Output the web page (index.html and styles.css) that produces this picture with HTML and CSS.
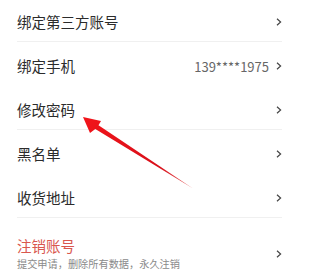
FILE: index.html
```html
<!DOCTYPE html>
<html lang="zh-CN">
<head>
<meta charset="utf-8">
<link rel="stylesheet" href="styles.css">
</head>
<body>
<div class="page">
  <div class="list">
    <div class="row divided"><span class="label">绑定第三方账号</span><span class="chev"><svg viewBox="0 0 6 8" width="6" height="8"><path d="M1 0.8 L4.6 4 L1 7.2" fill="none" stroke="#444" stroke-width="1.2"/></svg></span></div>
    <div class="row"><span class="label">绑定手机</span><span class="value">139****1975</span><span class="chev"><svg viewBox="0 0 6 8" width="6" height="8"><path d="M1 0.8 L4.6 4 L1 7.2" fill="none" stroke="#444" stroke-width="1.2"/></svg></span></div>
    <div class="row divided"><span class="label">修改密码</span><span class="chev"><svg viewBox="0 0 6 8" width="6" height="8"><path d="M1 0.8 L4.6 4 L1 7.2" fill="none" stroke="#444" stroke-width="1.2"/></svg></span></div>
    <div class="row"><span class="label">黑名单</span><span class="chev"><svg viewBox="0 0 6 8" width="6" height="8"><path d="M1 0.8 L4.6 4 L1 7.2" fill="none" stroke="#444" stroke-width="1.2"/></svg></span></div>
    <div class="row divided"><span class="label">收货地址</span><span class="chev"><svg viewBox="0 0 6 8" width="6" height="8"><path d="M1 0.8 L4.6 4 L1 7.2" fill="none" stroke="#444" stroke-width="1.2"/></svg></span></div>
    <div class="row tall">
      <div class="stack">
        <span class="label danger">注销账号</span>
        <span class="sub">提交申请，删除所有数据，永久注销</span>
      </div>
      <span class="chev"><svg viewBox="0 0 6 8" width="6" height="8"><path d="M1 0.8 L4.6 4 L1 7.2" fill="none" stroke="#444" stroke-width="1.2"/></svg></span>
    </div>
  </div>
  <svg class="arrow" width="300" height="275" viewBox="0 0 300 275">
    <defs>
      <linearGradient id="ag" x1="83" y1="117" x2="193" y2="188" gradientUnits="userSpaceOnUse">
        <stop offset="0" stop-color="#f2141a"/>
        <stop offset="0.7" stop-color="#d8101a"/>
        <stop offset="1" stop-color="#e86a6a"/>
      </linearGradient>
    </defs>
    <polygon points="83,117 101,121 98.5,125.3 193,188.5 95.3,129 90,133" fill="url(#ag)"/>
  </svg>
</div>
</body>
</html>
```
FILE: styles.css
```css
html, body {
  margin: 0;
  padding: 0;
  background: #fff;
}
.page {
  position: relative;
  width: 300px;
  height: 275px;
  overflow: hidden;
  font-family: "Noto Sans CJK SC", "Noto Sans", sans-serif;
}
.list {
  padding: 0 18px 0 17px;
}
.row {
  display: flex;
  align-items: center;
  height: 38px;
  padding-top: 3px;
  margin-bottom: 2px;
  border-bottom: 1px solid transparent;
}
.row.divided {
  border-bottom-color: #f0f0f0;
}
.label {
  flex: 1;
  font-size: 14.5px;
  color: #2b2b2b;
  line-height: 1;
}
.value {
  font-size: 13px;
  color: #666;
  margin-right: 7px;
  line-height: 1;
}
.chev {
  display: flex;
  width: 6px;
  height: 8px;
}
.row.tall {
  height: auto;
  padding-top: 19px;
  border-bottom: none;
}
.stack {
  flex: 1;
  display: flex;
  flex-direction: column;
  gap: 5px;
}
.danger {
  color: #d9574e;
}
.sub {
  font-size: 10.2px;
  color: #8a8a8a;
  line-height: 1;
}
.arrow {
  position: absolute;
  left: 0;
  top: 0;
}
```
